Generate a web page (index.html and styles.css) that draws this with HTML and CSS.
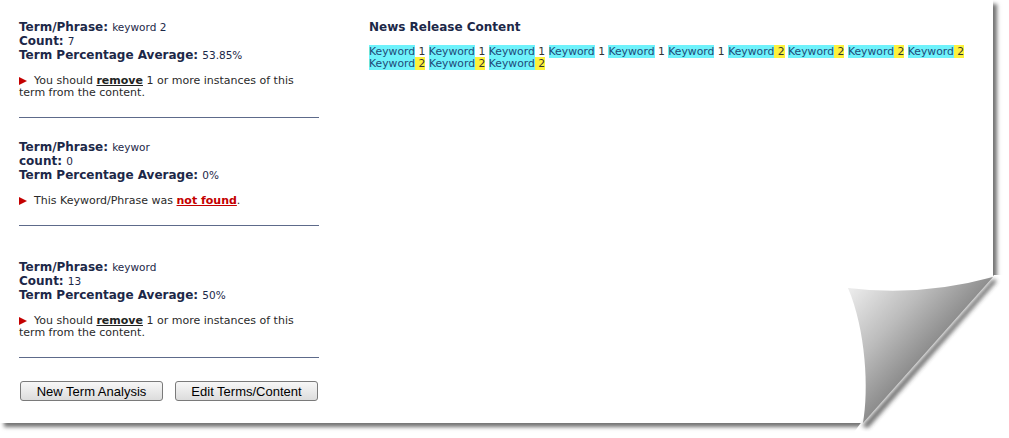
FILE: index.html
```html
<!DOCTYPE html>
<html lang="en">
<head>
    <meta charset="UTF-8">
    <title>Term Analysis</title>
    <link rel="stylesheet" href="styles.css">
</head>
<body>
    <div class="paper">
        <div class="terms">
            <div class="term-block">
                <div class="line">Term/Phrase: <span class="value">keyword 2</span></div>
                <div class="line">Count: <span class="value">7</span></div>
                <div class="line">Term Percentage Average: <span class="value">53.85%</span></div>
                <p class="note"><span class="arrow"></span>You should <b class="action">remove</b> 1 or more instances of this term from the content.</p>
            </div>
            <hr class="divider">

            <div class="term-block">
                <div class="line">Term/Phrase: <span class="value">keywor</span></div>
                <div class="line">count: <span class="value">0</span></div>
                <div class="line">Term Percentage Average: <span class="value">0%</span></div>
                <p class="note"><span class="arrow"></span>This Keyword/Phrase was <b class="missing">not found</b>.</p>
            </div>
            <hr class="divider divider-wide">

            <div class="term-block">
                <div class="line">Term/Phrase: <span class="value">keyword</span></div>
                <div class="line">Count: <span class="value">13</span></div>
                <div class="line">Term Percentage Average: <span class="value">50%</span></div>
                <p class="note"><span class="arrow"></span>You should <b class="action">remove</b> 1 or more instances of this term from the content.</p>
            </div>
            <hr class="divider">

            <div class="actions">
                <button type="button">New Term Analysis</button>
                <button type="button">Edit Terms/Content</button>
            </div>
        </div>

        <div class="content">
            <h2>News Release Content</h2>
            <p class="release"><span class="kw">Keyword</span> 1 <span class="kw">Keyword</span> 1 <span class="kw">Keyword</span> 1 <span class="kw">Keyword</span> 1 <span class="kw">Keyword</span> 1 <span class="kw">Keyword</span> 1 <span class="kw">Keyword</span><span class="hit">&nbsp;2</span> <span class="kw">Keyword</span><span class="hit">&nbsp;2</span> <span class="kw">Keyword</span><span class="hit">&nbsp;2</span> <span class="kw">Keyword</span><span class="hit">&nbsp;2</span> <span class="kw">Keyword</span><span class="hit">&nbsp;2</span> <span class="kw">Keyword</span><span class="hit">&nbsp;2</span> <span class="kw">Keyword</span><span class="hit">&nbsp;2</span></p>
        </div>

        <!-- page curl in the bottom right corner -->
        <svg class="curl" viewBox="840 265 169 173" width="169" height="173">
            <defs>
                <linearGradient id="curlFill" gradientUnits="userSpaceOnUse" x1="850" y1="290" x2="922" y2="356">
                    <stop offset="0" stop-color="#ebebeb"/>
                    <stop offset="0.55" stop-color="#bcbcbc"/>
                    <stop offset="1" stop-color="#8e8e8e"/>
                </linearGradient>
                <filter id="soft" x="-20%" y="-20%" width="140%" height="140%">
                    <feGaussianBlur stdDeviation="2.2"/>
                </filter>
            </defs>
            <polygon points="994,275 1009,275 1009,438 850,438 860,424" fill="#fff"/>
            <polygon points="993,279 997,281 868,428 862,426" fill="#333" opacity="0.7" filter="url(#soft)"/>
            <path d="M848,288 Q920,297 993,277 L863,423 C869,390 866,330 848,288 Z" fill="url(#curlFill)"/>
        </svg>
    </div>
</body>
</html>
```

FILE: styles.css
```css
:root {
    --navy: #1c2848;
    --text: #2a2a2a;
    --red: #c40000;
    --rule: #5d6a8a;
    --cyan: #6ef2fb;
    --yellow: #fdf23c;
}

body {
    margin: 0;
    padding-bottom: 15px;
    background: #fff;
    font-family: "DejaVu Sans", Verdana, sans-serif;
    color: var(--text);
}

.paper {
    position: relative;
    display: flex;
    gap: 50px;
    width: 993px;
    height: 423px;
    box-sizing: border-box;
    padding: 20px 15px 0 19px;
    background: #fff;
    box-shadow: 4px 4px 4px rgba(0, 0, 0, 0.55);
}

.terms {
    width: 300px;
    flex-shrink: 0;
}

.line {
    font-size: 12px;
    font-weight: bold;
    line-height: 14px;
    color: var(--navy);
}

.value {
    font-size: 10.5px;
    font-weight: normal;
    line-height: 1;
}

.note {
    margin: 13px 0 0;
    font-size: 11px;
    line-height: 12px;
    color: var(--text);
}

.arrow {
    display: inline-block;
    width: 0;
    height: 0;
    margin: 0 7px 0 0;
    border-left: 8px solid var(--red);
    border-top: 4px solid transparent;
    border-bottom: 4px solid transparent;
    vertical-align: -1px;
}

.action {
    text-decoration: underline;
    color: #222;
}

.missing {
    text-decoration: underline;
    color: var(--red);
}

.divider {
    margin: 18px 0 22px;
    border: none;
    border-top: 1px solid var(--rule);
}

.divider-wide {
    margin-bottom: 34px;
}

.actions {
    display: flex;
    gap: 12px;
    margin-top: 23px;
    padding-left: 1px;
}

button {
    width: 143px;
    height: 20px;
    padding: 0;
    font-family: "Liberation Sans", Arial, sans-serif;
    font-size: 13px;
    color: #000;
    background: linear-gradient(#f7f7f7, #dcdcdc);
    border: 1px solid #7a7a7a;
    border-radius: 3px;
}

.content {
    flex: 1;
}

h2 {
    margin: 0;
    font-size: 12px;
    line-height: 14px;
    color: var(--navy);
}

.release {
    margin: 12px 0 0;
    font-size: 10.8px;
    line-height: 12px;
    color: #333;
}

.kw {
    background: var(--cyan);
    color: #1f4a78;
}

.hit {
    background: var(--yellow);
    color: #333;
}

.curl {
    position: absolute;
    left: 840px;
    top: 265px;
}
```
